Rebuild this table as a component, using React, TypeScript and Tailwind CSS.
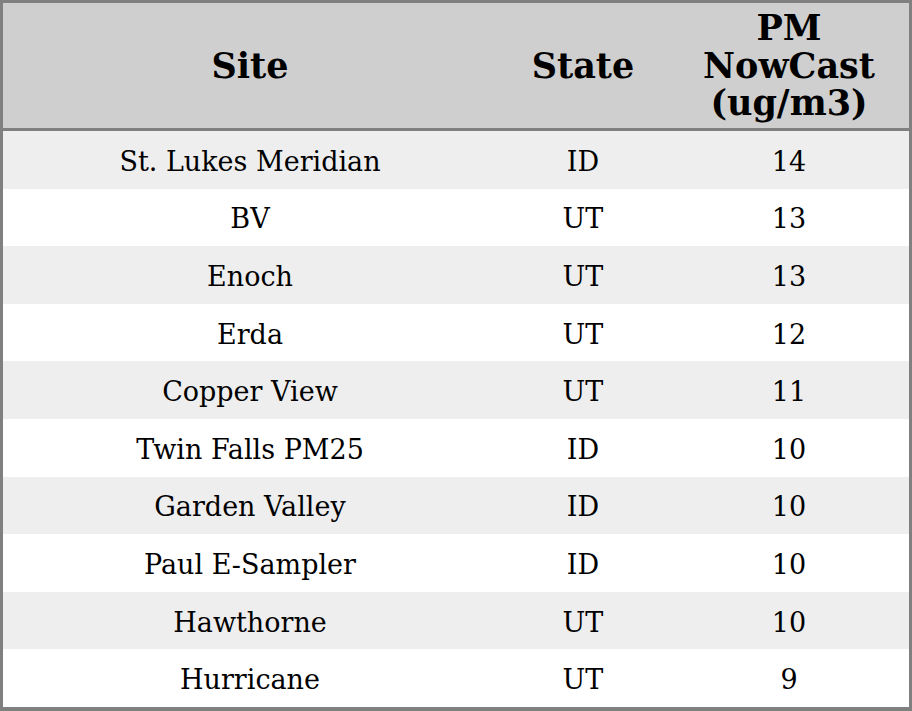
import React from 'react';

interface Reading {
  site: string;
  state: string;
  value: number;
}

const readings: Reading[] = [
  { site: 'St. Lukes Meridian', state: 'ID', value: 14 },
  { site: 'BV', state: 'UT', value: 13 },
  { site: 'Enoch', state: 'UT', value: 13 },
  { site: 'Erda', state: 'UT', value: 12 },
  { site: 'Copper View', state: 'UT', value: 11 },
  { site: 'Twin Falls PM25', state: 'ID', value: 10 },
  { site: 'Garden Valley', state: 'ID', value: 10 },
  { site: 'Paul E-Sampler', state: 'ID', value: 10 },
  { site: 'Hawthorne', state: 'UT', value: 10 },
  { site: 'Hurricane', state: 'UT', value: 9 },
];

const App: React.FC = () => {
  return (
    <div className="w-[912px] h-[711px] overflow-hidden bg-white">
      <div
        className="w-[912px] border-[3px] border-b-4 border-[#808080] text-black"
        style={{ fontFamily: '"DejaVu Serif", serif' }}
      >
        <div className="grid grid-cols-[494px_172px_240px] h-[128px] bg-[#cfcfcf] border-b-[3px] border-[#808080] text-[35px] font-bold leading-[37.5px] items-center text-center">
          <div>Site</div>
          <div>State</div>
          <div>
            PM
            <br />
            NowCast
            <br />
            (ug/m3)
          </div>
        </div>
        {readings.map((r, i) => (
          <div
            key={r.site}
            className={`grid grid-cols-[494px_172px_240px] h-[57.6px] pt-[3px] items-center text-center text-[27px] leading-none ${
              i % 2 === 0 ? 'bg-[#eeeeee]' : 'bg-white'
            }`}
          >
            <div>{r.site}</div>
            <div>{r.state}</div>
            <div>{r.value}</div>
          </div>
        ))}
      </div>
    </div>
  );
};

export default App;
